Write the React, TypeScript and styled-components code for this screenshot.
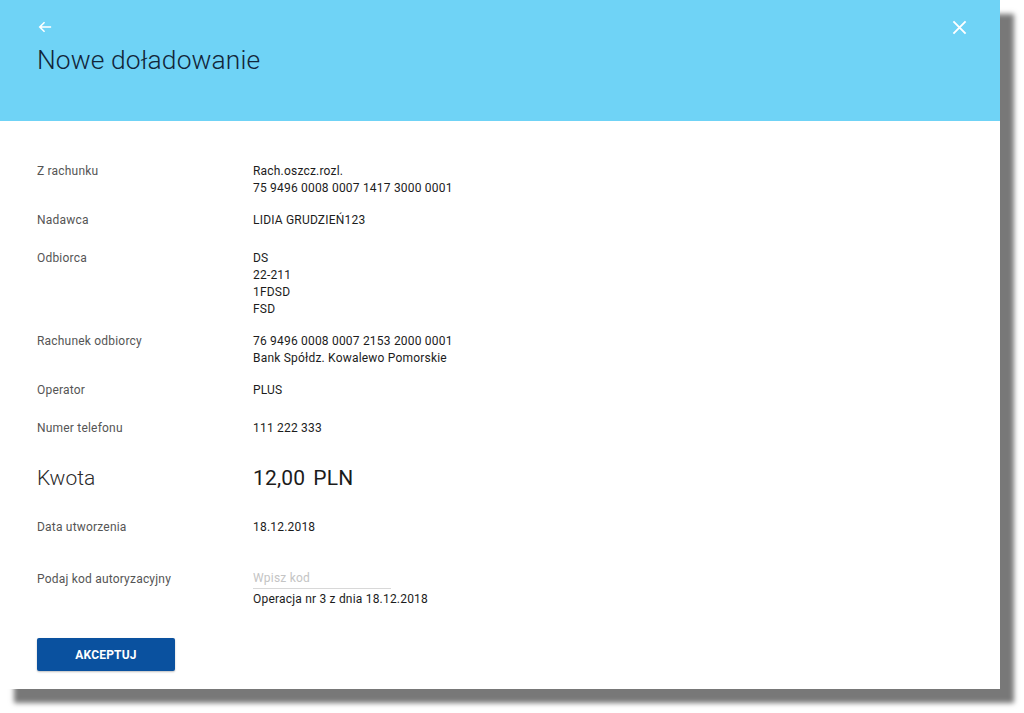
import React, { useState } from "react";
import styled, { createGlobalStyle } from "styled-components";

const GlobalStyle = createGlobalStyle`
  html, body {
    margin: 0;
    padding: 0;
    background: #ffffff;
  }
  body {
    font-family: Roboto, "Liberation Sans", Arial, sans-serif;
  }
`;

const Page = styled.div`
  width: 1024px;
  height: 713px;
  overflow: hidden;
`;

const Panel = styled.div`
  width: 1000px;
  height: 689px;
  background: #ffffff;
  box-shadow: 14px 14px 5px rgba(0, 0, 0, 0.53);
  display: flex;
  flex-direction: column;
`;

const Header = styled.header`
  height: 121px;
  background: #6fd3f6;
  padding: 0 33px 0 37px;
  box-sizing: border-box;
  display: flex;
  flex-direction: column;
`;

const HeaderTop = styled.div`
  display: flex;
  justify-content: space-between;
  align-items: center;
  padding-top: 19px;
  height: 16px;
`;

const IconButton = styled.button`
  background: none;
  border: 0;
  padding: 0;
  margin: 0;
  width: 16px;
  height: 16px;
  display: flex;
  align-items: center;
  justify-content: center;
  cursor: pointer;
`;

const Title = styled.h1`
  margin: 10px 0 0;
  font-size: 26.4px;
  font-weight: 300;
  color: #12263a;
  letter-spacing: 0.1px;
`;

const Body = styled.div`
  padding: 42px 37px 0;
  display: flex;
  flex-direction: column;
`;

const Row = styled.div<{ $top?: number; $bottom?: number }>`
  display: grid;
  grid-template-columns: 216px 1fr;
  min-height: 23px;
  margin-top: ${(p) => p.$top ?? 0}px;
  padding-bottom: ${(p) => p.$bottom ?? 15}px;
`;

const Label = styled.div<{ $big?: boolean }>`
  font-size: ${(p) => (p.$big ? "21px" : "12px")};
  line-height: ${(p) => (p.$big ? "30px" : "17px")};
  letter-spacing: ${(p) => (p.$big ? "0" : "0.2px")};
  color: ${(p) => (p.$big ? "#2b2b2b" : "#555555")};
  font-weight: ${(p) => (p.$big ? 300 : 400)};
`;

const Value = styled.div<{ $big?: boolean }>`
  font-size: ${(p) => (p.$big ? "21px" : "12px")};
  line-height: ${(p) => (p.$big ? "30px" : "17px")};
  letter-spacing: 0.2px;
  color: #1c1c1c;
  font-weight: 400;
`;

const Currency = styled.span`
  margin-left: 8px;
`;

const CodeField = styled.div`
  display: flex;
  flex-direction: column;
`;

const CodeInput = styled.input`
  width: 138px;
  border: 0;
  border-bottom: 1px solid #d8d8d8;
  padding: 0 0 3px;
  margin: 0;
  font-family: inherit;
  font-size: 12px;
  line-height: 14px;
  letter-spacing: 0.2px;
  color: #1c1c1c;
  outline: none;
  background: transparent;
  &::placeholder {
    color: #c4c4c4;
  }
`;

const Hint = styled.div`
  font-size: 12px;
  line-height: 17px;
  letter-spacing: 0.2px;
  color: #1c1c1c;
  margin-top: 2px;
`;

const AcceptButton = styled.button`
  margin-top: 30px;
  width: 138px;
  height: 33px;
  background: #0a519f;
  border: 0;
  border-radius: 2px;
  box-shadow: 0 1px 2px rgba(0, 0, 0, 0.25);
  color: #ffffff;
  font-family: inherit;
  font-size: 12px;
  font-weight: 700;
  letter-spacing: 0.2px;
  cursor: pointer;
`;

const BackIcon = () => (
  <svg width="14" height="14" viewBox="0 0 16 16" fill="none">
    <path d="M15 8H2M7.5 2.5L2 8l5.5 5.5" stroke="#ffffff" strokeWidth="1.8" />
  </svg>
);

const CloseIcon = () => (
  <svg width="15" height="15" viewBox="0 0 16 16" fill="none">
    <path d="M1.5 1.5l13 13M14.5 1.5l-13 13" stroke="#ffffff" strokeWidth="2" />
  </svg>
);

const details: { label: string; lines: string[] }[] = [
  { label: "Z rachunku", lines: ["Rach.oszcz.rozl.", "75 9496 0008 0007 1417 3000 0001"] },
  { label: "Nadawca", lines: ["LIDIA GRUDZIEŃ123"] },
  { label: "Odbiorca", lines: ["DS", "22-211", "1FDSD", "FSD"] },
  {
    label: "Rachunek odbiorcy",
    lines: ["76 9496 0008 0007 2153 2000 0001", "Bank Spółdz. Kowalewo Pomorskie"],
  },
  { label: "Operator", lines: ["PLUS"] },
  { label: "Numer telefonu", lines: ["111 222 333"] },
];

const App = () => {
  const [code, setCode] = useState("");

  return (
    <Page>
      <GlobalStyle />
      <Panel>
        <Header>
          <HeaderTop>
            <IconButton aria-label="Wstecz">
              <BackIcon />
            </IconButton>
            <IconButton aria-label="Zamknij">
              <CloseIcon />
            </IconButton>
          </HeaderTop>
          <Title>Nowe doładowanie</Title>
        </Header>
        <Body>
          {details.map((d) => (
            <Row key={d.label}>
              <Label>{d.label}</Label>
              <Value>
                {d.lines.map((l) => (
                  <div key={l}>{l}</div>
                ))}
              </Value>
            </Row>
          ))}
          <Row $top={5} $bottom={26}>
            <Label $big>Kwota</Label>
            <Value $big>
              12,00<Currency>PLN</Currency>
            </Value>
          </Row>
          <Row>
            <Label>Data utworzenia</Label>
            <Value>18.12.2018</Value>
          </Row>
          <Row $top={14} $bottom={0}>
            <Label>Podaj kod autoryzacyjny</Label>
            <CodeField>
              <CodeInput
                placeholder="Wpisz kod"
                value={code}
                onChange={(e) => setCode(e.target.value)}
              />
              <Hint>Operacja nr 3 z dnia 18.12.2018</Hint>
            </CodeField>
          </Row>
          <div>
            <AcceptButton>AKCEPTUJ</AcceptButton>
          </div>
        </Body>
      </Panel>
    </Page>
  );
};

export default App;
